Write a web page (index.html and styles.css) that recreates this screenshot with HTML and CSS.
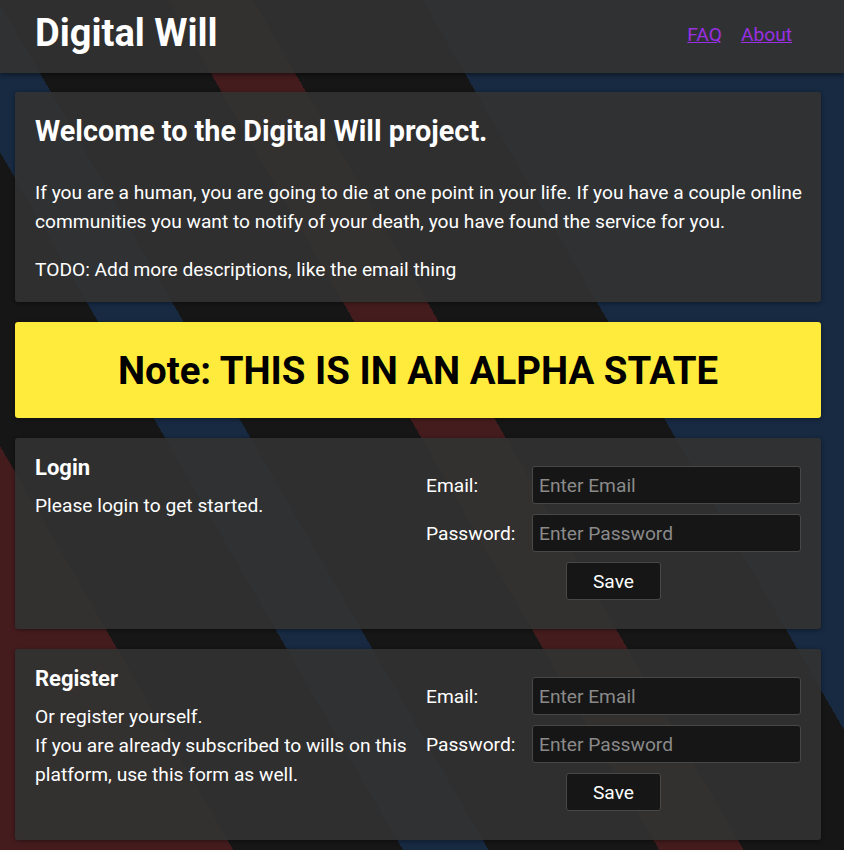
FILE: index.html
```html
<!DOCTYPE html>
<html lang="en">
<head>
<meta charset="utf-8">
<title>Digital Will</title>
<link rel="stylesheet" href="styles.css">
</head>
<body>
<header class="topbar">
  <h1 class="brand">Digital Will</h1>
  <nav class="nav">
    <a href="#faq">FAQ</a>
    <a href="#about">About</a>
  </nav>
</header>
<main class="content">
  <section class="card intro">
    <h2 class="intro-title">Welcome to the Digital Will project.</h2>
    <p class="text">If you are a human, you are going to die at one point in your life. If you have a couple online communities you want to notify of your death, you have found the service for you.</p>
    <p class="text todo">TODO: Add more descriptions, like the email thing</p>
  </section>
  <section class="banner">
    <h2 class="banner-text">Note: THIS IS IN AN ALPHA STATE</h2>
  </section>
  <section class="card split">
    <div class="split-info">
      <h3 class="card-title">Login</h3>
      <p class="text">Please login to get started.</p>
    </div>
    <form class="auth-form">
      <label class="field-label" for="le">Email:</label>
      <input class="field" id="le" type="email" placeholder="Enter Email">
      <label class="field-label" for="lp">Password:</label>
      <input class="field" id="lp" type="password" placeholder="Enter Password">
      <div class="actions"><button class="btn" type="button">Save</button></div>
    </form>
  </section>
  <section class="card split">
    <div class="split-info">
      <h3 class="card-title">Register</h3>
      <p class="text">Or register yourself.<br>If you are already subscribed to wills on this platform, use this form as well.</p>
    </div>
    <form class="auth-form">
      <label class="field-label" for="re">Email:</label>
      <input class="field" id="re" type="email" placeholder="Enter Email">
      <label class="field-label" for="rp">Password:</label>
      <input class="field" id="rp" type="password" placeholder="Enter Password">
      <div class="actions"><button class="btn" type="button">Save</button></div>
    </form>
  </section>
</main>
</body>
</html>
```

FILE: styles.css
```css
html {
  background-color: #161616;
  background-image: linear-gradient(60deg,
    #451c1e 0, #451c1e 202px,
    #161616 202px, #161616 349px,
    #172a42 349px, #172a42 423px,
    #161616 423px, #161616 571px,
    #451c1e 571px, #451c1e 644px,
    #161616 644px, #161616 791px,
    #172a42 791px, #172a42 100%);
  background-attachment: fixed;
  min-height: 100%;
}

body {
  margin: 0;
  font-family: Roboto, "Liberation Sans", sans-serif;
  color: #fff;
  font-size: 19.2px;
}

.topbar {
  height: 73px;
  display: flex;
  align-items: center;
  justify-content: space-between;
  padding: 0 52px 0 35px;
  background: rgba(50, 50, 50, 0.92);
  box-shadow: 0 2px 5px rgba(0, 0, 0, 0.45);
}

.brand {
  margin: 0;
  font-size: 38px;
  font-weight: 700;
  line-height: 1;
  padding-bottom: 8px;
}

.nav {
  display: flex;
  gap: 19px;
  padding-bottom: 4px;
}

.nav a {
  color: #9a2fe3;
  font-size: 19.2px;
}

.content {
  display: flex;
  flex-direction: column;
  gap: 20px;
  padding: 19px 23px 10px 15px;
}

.card {
  background: rgba(50, 50, 50, 0.92);
  border-radius: 3px;
  box-shadow: 0 1px 4px rgba(0, 0, 0, 0.4);
}

.intro {
  padding: 20px 10px 18px 20px;
}

.intro-title {
  margin: 0 0 28px;
  font-size: 28.8px;
  line-height: 38px;
  font-weight: 700;
}

.text {
  margin: 0;
  line-height: 29px;
}

.todo {
  margin-top: 19px;
}

.banner {
  height: 96px;
  display: flex;
  align-items: center;
  justify-content: center;
  background: #ffeb3b;
  border-radius: 3px;
  box-shadow: 0 1px 4px rgba(0, 0, 0, 0.4);
}

.banner-text {
  margin: 0;
  color: #000;
  font-size: 38.4px;
  font-weight: 700;
}

.split {
  display: grid;
  grid-template-columns: 1fr 1fr;
  column-gap: 16px;
  padding: 17px 20px 29px;
}

.card-title {
  margin: 0 0 10px;
  font-size: 22px;
  line-height: 26px;
  font-weight: 700;
}

.auth-form {
  display: grid;
  grid-template-columns: 106px 1fr;
  row-gap: 10px;
  align-items: center;
  padding-top: 11px;
}

.field-label {
  font-size: 19.2px;
}

.field {
  box-sizing: border-box;
  height: 38px;
  width: 100%;
  margin: 0;
  padding: 0 6px;
  background: #161616;
  border: 1px solid #484848;
  border-radius: 3px;
  color: #fff;
  font-family: Roboto, "Liberation Sans", sans-serif;
  font-size: 19.2px;
}

.field::placeholder {
  color: #8a8a8a;
}

.actions {
  grid-column: 1 / -1;
  display: flex;
  justify-content: center;
}

.btn {
  box-sizing: border-box;
  width: 95px;
  height: 38px;
  background: #161616;
  border: 1px solid #484848;
  border-radius: 3px;
  color: #fff;
  font-family: Roboto, "Liberation Sans", sans-serif;
  font-size: 19.2px;
  cursor: pointer;
}
```
